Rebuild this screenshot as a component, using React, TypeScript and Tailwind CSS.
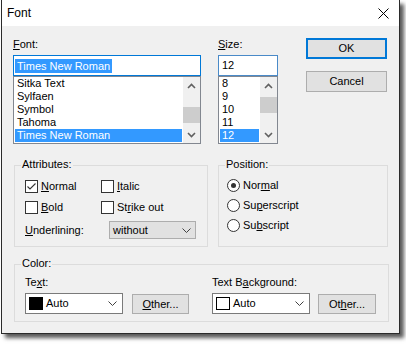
import React from "react";

const FONT = { fontFamily: '"Liberation Sans", Arial, sans-serif' };

function U({ children }: { children: React.ReactNode }) {
  return <span className="underline underline-offset-[1px]">{children}</span>;
}

function Chevron({ down }: { down?: boolean }) {
  return (
    <svg width="9" height="6" viewBox="0 0 9 6">
      <path
        d={down ? "M1 1 L4.5 4.5 L8 1" : "M1 5 L4.5 1.5 L8 5"}
        fill="none"
        stroke="#606060"
        strokeWidth="1.6"
      />
    </svg>
  );
}

function ComboArrow() {
  return (
    <svg width="9" height="5" viewBox="0 0 9 5">
      <path d="M0.5 0.5 L4.5 4.5 L8.5 0.5" fill="none" stroke="#404040" strokeWidth="1" />
    </svg>
  );
}

function ScrollBar({ thumbMt }: { thumbMt: "a" | "b" }) {
  return (
    <div className="flex h-full w-[17px] flex-col bg-[#f0f0f0]">
      <div className="flex h-[17px] items-center justify-center">
        <Chevron />
      </div>
      <div className="flex-1">
        <div className={thumbMt === "a" ? "mt-[13px] h-[16px] bg-[#cdcdcd]" : "mt-[3px] h-[16px] bg-[#cdcdcd]"} />
      </div>
      <div className="flex h-[17px] items-center justify-center">
        <Chevron down />
      </div>
    </div>
  );
}

function ListBox({ items, selected, thumb }: { items: string[]; selected: string; thumb: "a" | "b" }) {
  return (
    <div className="flex h-[68px] border border-[#828790] bg-white">
      <div className="flex-1 px-[1px]">
        {items.map((it) => (
          <div
            key={it}
            className={
              it === selected
                ? "h-[13px] bg-[#3399ff] pl-[2px] text-[11px] leading-[13px] text-white"
                : "h-[13px] pl-[2px] text-[11px] leading-[13px] text-black"
            }
          >
            {it}
          </div>
        ))}
      </div>
      <ScrollBar thumbMt={thumb} />
    </div>
  );
}

function CheckBox({ checked }: { checked?: boolean }) {
  return (
    <div className="flex h-[13px] w-[13px] shrink-0 items-center justify-center border border-[#333333] bg-white">
      {checked && (
        <svg width="11" height="11" viewBox="0 0 11 11">
          <path d="M1.5 5.5 L4 8 L9.5 2.5" fill="none" stroke="#333333" strokeWidth="1.1" />
        </svg>
      )}
    </div>
  );
}

function Radio({ checked }: { checked?: boolean }) {
  return (
    <div className="flex h-[13px] w-[13px] shrink-0 items-center justify-center rounded-full border border-[#333333] bg-white">
      {checked && <div className="h-[5px] w-[5px] rounded-full bg-[#333333]" />}
    </div>
  );
}

function Group({ label, className, children }: { label: string; className: string; children: React.ReactNode }) {
  return (
    <div className={"relative border border-[#dcdcdc] " + className}>
      <div className="absolute left-[6px] top-[-8px] bg-[#f0f0f0] px-[1px] text-[11px] leading-[13px] text-black">
        {label}
      </div>
      {children}
    </div>
  );
}

function ColorCombo({ black }: { black?: boolean }) {
  return (
    <div className="flex h-[21px] w-[98px] items-center border border-[#7a7a7a] bg-white pl-[3px] pr-[5px]">
      <div
        className={
          black
            ? "h-[13px] w-[14px] shrink-0 bg-black"
            : "h-[13px] w-[14px] shrink-0 border border-black bg-white"
        }
      />
      <span className="ml-[3px] flex-1 text-[11px] leading-[13px]">Auto</span>
      <ComboArrow />
    </div>
  );
}

function Button({ children, className }: { children: React.ReactNode; className?: string }) {
  return (
    <div
      className={
        "flex items-center justify-center border border-[#adadad] bg-[#e1e1e1] text-[11px] leading-[13px] text-black " +
        (className ?? "")
      }
    >
      {children}
    </div>
  );
}

export default function App() {
  return (
    <div className="h-[344px] w-[406px] bg-white" style={FONT}>
      <div className="ml-[1px] flex h-[334px] w-[399px] flex-col border-x border-b border-[#2b2b2b] shadow-[4px_4px_4px_rgba(0,0,0,0.65)]">
        {/* title bar */}
        <div className="flex h-[26px] shrink-0 items-center justify-between bg-white pl-[5px] pr-[10px]">
          <span className="text-[12px] leading-[14px] text-black">Font</span>
          <svg width="11" height="11" viewBox="0 0 11 11">
            <path d="M0.5 0.5 L10.5 10.5 M10.5 0.5 L0.5 10.5" stroke="#000" strokeWidth="1" />
          </svg>
        </div>
        {/* body */}
        <div className="flex flex-1 flex-col bg-[#f0f0f0] pl-[11px] pt-[12px] text-black">
          {/* top row */}
          <div className="flex items-start">
            <div className="flex w-[188px] flex-col">
              <div className="h-[17px] text-[11px] leading-[13px]">
                <U>F</U>ont:
              </div>
              <div className="flex h-[21px] items-center border border-[#0078d7] bg-white pl-[1px]">
                <span className="bg-[#3399ff] px-[2px] text-[11px] leading-[14px] text-white">Times New Roman</span>
              </div>
              <ListBox
                items={["Sitka Text", "Sylfaen", "Symbol", "Tahoma", "Times New Roman"]}
                selected="Times New Roman"
                thumb="a"
              />
            </div>
            <div className="ml-[17px] flex w-[60px] flex-col">
              <div className="h-[17px] text-[11px] leading-[13px]">
                <U>S</U>ize:
              </div>
              <div className="flex h-[21px] items-center border border-[#4a8ac8] bg-white pl-[3px] text-[11px] leading-[13px]">
                12
              </div>
              <ListBox items={["8", "9", "10", "11", "12"]} selected="12" thumb="b" />
            </div>
            <div className="ml-[28px] flex w-[81px] flex-col">
              <div className="flex h-[21px] items-center justify-center border-2 border-[#0078d7] bg-[#e1e1e1] text-[11px] leading-[13px]">
                OK
              </div>
              <Button className="mt-[12px] h-[21px]">Cancel</Button>
            </div>
          </div>

          {/* attributes / position */}
          <div className="ml-[1px] mt-[21px] flex gap-[10px]">
            <Group label="Attributes:" className="h-[82px] w-[194px] pl-[10px] pt-[14px]">
              <div className="flex h-[13px] items-center">
                <div className="flex w-[76px] items-center">
                  <CheckBox checked />
                  <span className="ml-[3px] text-[11px] leading-[13px]">
                    <U>N</U>ormal
                  </span>
                </div>
                <CheckBox />
                <span className="ml-[3px] text-[11px] leading-[13px]">
                  <U>I</U>talic
                </span>
              </div>
              <div className="mt-[8px] flex h-[13px] items-center">
                <div className="flex w-[76px] items-center">
                  <CheckBox />
                  <span className="ml-[3px] text-[11px] leading-[13px]">
                    <U>B</U>old
                  </span>
                </div>
                <CheckBox />
                <span className="ml-[3px] text-[11px] leading-[13px]">
                  St<U>r</U>ike out
                </span>
              </div>
              <div className="mt-[7px] flex items-center">
                <span className="w-[84px] text-[11px] leading-[13px]">
                  <U>U</U>nderlining:
                </span>
                <div className="flex h-[18px] w-[87px] items-center border border-[#adadad] bg-[#e1e1e1] pl-[3px] pr-[4px]">
                  <span className="flex-1 text-[11px] leading-[13px]">without</span>
                  <ComboArrow />
                </div>
              </div>
            </Group>
            <Group label="Position:" className="h-[82px] w-[170px] pl-[8px] pt-[13px]">
              <div className="flex h-[13px] items-center">
                <Radio checked />
                <span className="ml-[3px] text-[11px] leading-[13px]">
                  Nor<U>m</U>al
                </span>
              </div>
              <div className="mt-[7px] flex h-[13px] items-center">
                <Radio />
                <span className="ml-[3px] text-[11px] leading-[13px]">
                  Su<U>p</U>erscript
                </span>
              </div>
              <div className="mt-[7px] flex h-[13px] items-center">
                <Radio />
                <span className="ml-[3px] text-[11px] leading-[13px]">
                  Su<U>b</U>script
                </span>
              </div>
            </Group>
          </div>

          {/* color */}
          <Group label="Color:" className="ml-[1px] mt-[17px] h-[58px] w-[375px] pl-[10px] pt-[11px]">
            <div className="flex">
              <div className="flex flex-col">
                <div className="h-[17px] text-[11px] leading-[13px]">
                  Te<U>x</U>t:
                </div>
                <div className="flex items-start">
                  <ColorCombo black />
                  <Button className="ml-[9px] mt-[1px] h-[20px] w-[57px]">
                    <span>
                      <U>O</U>ther...
                    </span>
                  </Button>
                </div>
              </div>
              <div className="ml-[23px] flex flex-col">
                <div className="h-[17px] text-[11px] leading-[13px]">
                  Text B<U>a</U>ckground:
                </div>
                <div className="flex items-start">
                  <ColorCombo />
                  <Button className="ml-[8px] mt-[1px] h-[20px] w-[58px]">
                    <span>
                      Ot<U>h</U>er...
                    </span>
                  </Button>
                </div>
              </div>
            </div>
          </Group>
        </div>
      </div>
    </div>
  );
}
